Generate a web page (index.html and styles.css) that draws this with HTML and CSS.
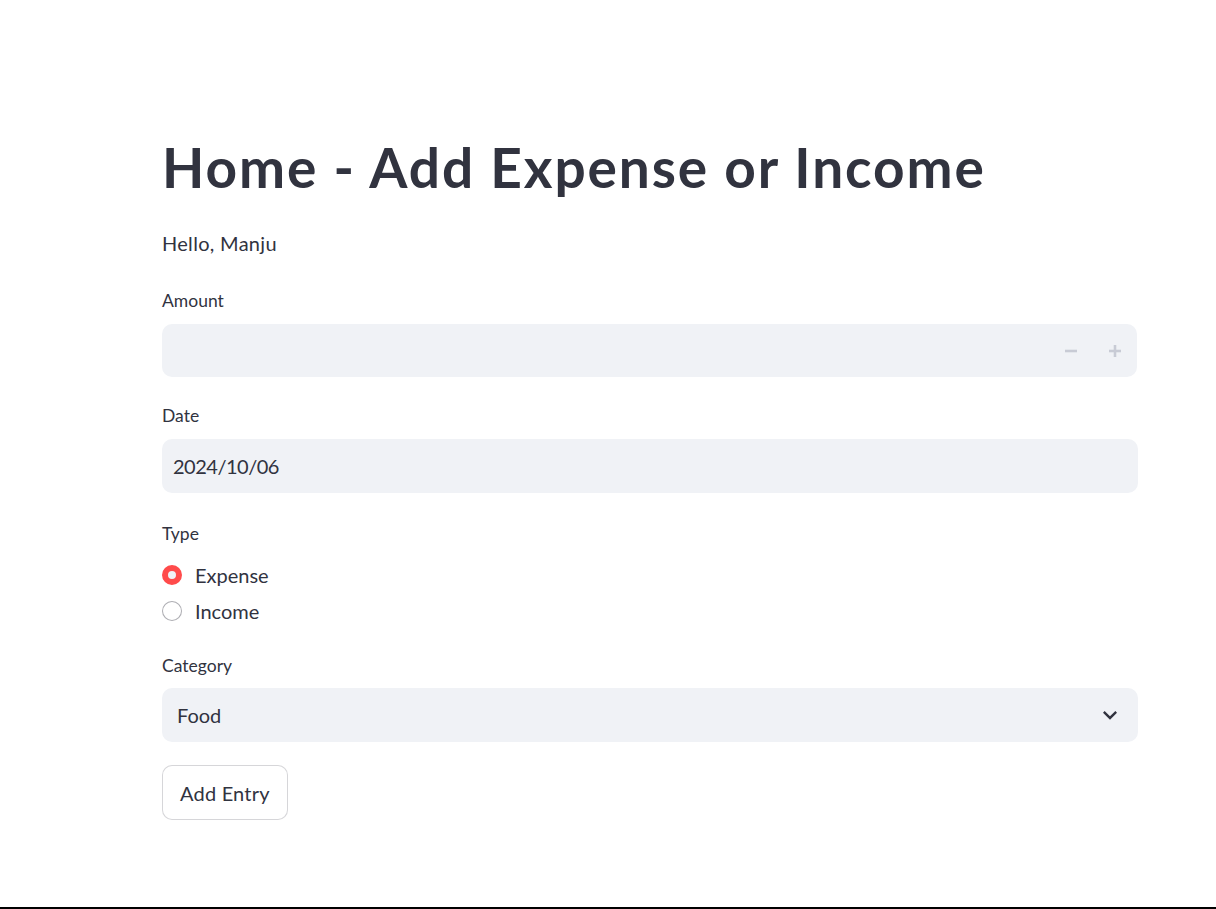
FILE: index.html
```html
<!DOCTYPE html>
<html lang="en">
<head>
<meta charset="utf-8">
<title>Home - Add Expense or Income</title>
<link rel="stylesheet" href="styles.css">
</head>
<body>
<main class="page">
  <h1 class="title">Home - Add Expense or Income</h1>
  <p class="hello">Hello, Manju</p>

  <div class="field field-amount">
    <label class="label">Amount</label>
    <div class="input input-number">
      <span class="value"></span>
      <div class="steppers">
        <button class="step" aria-label="decrement">
          <svg width="14" height="14" viewBox="0 0 14 14"><line x1="1" y1="7" x2="13" y2="7" stroke="#c8cbd5" stroke-width="2.6"/></svg>
        </button>
        <button class="step" aria-label="increment">
          <svg width="14" height="14" viewBox="0 0 14 14"><line x1="1" y1="7" x2="13" y2="7" stroke="#c8cbd5" stroke-width="2.6"/><line x1="7" y1="1" x2="7" y2="13" stroke="#c8cbd5" stroke-width="2.6"/></svg>
        </button>
      </div>
    </div>
  </div>

  <div class="field field-date">
    <label class="label">Date</label>
    <div class="input input-date"><span class="value">2024/10/06</span></div>
  </div>

  <div class="field field-type">
    <label class="label">Type</label>
    <div class="radios">
      <div class="radio-row"><span class="radio checked"></span><span class="radio-text">Expense</span></div>
      <div class="radio-row"><span class="radio"></span><span class="radio-text">Income</span></div>
    </div>
  </div>

  <div class="field field-category">
    <label class="label">Category</label>
    <div class="input input-select">
      <span class="value">Food</span>
      <svg class="chevron" width="28" height="28" viewBox="0 0 24 24"><path d="M16.59 8.59L12 13.17 7.41 8.59 6 10l6 6 6-6z" fill="#31333f"/></svg>
    </div>
  </div>

  <button class="btn">Add Entry</button>
</main>
</body>
</html>
```

FILE: styles.css
```css
html, body {
  margin: 0;
  padding: 0;
}
body {
  min-height: 100vh;
  box-sizing: border-box;
  border-bottom: 2px solid #000;
  background: #fff;
  font-family: Lato, "Noto Sans", sans-serif;
  color: #31333f;
}
.page {
  width: 976px;
  margin-left: 162px;
  padding-top: 134px;
  display: flex;
  flex-direction: column;
  align-items: flex-start;
}
.title {
  margin: 0;
  font-size: 55px;
  line-height: 66px;
  font-weight: 700;
  letter-spacing: 1.9px;
  color: #31333f;
}
.hello {
  margin: 28px 0 0;
  font-size: 20px;
  line-height: 30px;
  letter-spacing: 0.3px;
}
.field {
  width: 100%;
  display: flex;
  flex-direction: column;
  gap: 10px;
  margin-top: 26px;
}
.field-amount {
  margin-top: 30px;
}
.field-date {
  margin-top: 26px;
}
.field-type {
  margin-top: 28px;
}
.field-category {
  margin-top: 24px;
  gap: 9px;
}
.label {
  font-size: 17.5px;
  line-height: 26px;
}
.input {
  height: 54px;
  background: #f0f2f6;
  border-radius: 10px;
  display: flex;
  align-items: center;
  box-sizing: border-box;
}
.input-number {
  height: 53px;
  width: 975px;
  padding-left: 11px;
  justify-content: space-between;
}
.steppers {
  display: flex;
  height: 100%;
}
.step {
  width: 44px;
  height: 100%;
  border: 0;
  background: transparent;
  padding: 0;
  display: flex;
  align-items: center;
  justify-content: center;
}
.input-date {
  padding-left: 11px;
  font-size: 20px;
}
.input-select {
  padding-left: 15px;
  padding-right: 14px;
  font-size: 20px;
  justify-content: space-between;
}
.value {
  font-size: 20px;
  color: #31333f;
}
.input-date .value {
  letter-spacing: -0.5px;
}
.radios {
  display: flex;
  flex-direction: column;
}
.radio-row {
  display: flex;
  align-items: center;
  height: 36px;
  gap: 13px;
}
.radio {
  width: 20px;
  height: 20px;
  border-radius: 50%;
  box-sizing: border-box;
  border: 1px solid rgba(49, 51, 63, 0.4);
  background: #fff;
}
.radio.checked {
  border: 6px solid #ff4b4b;
  background: #f0f2f6;
}
.radio-text {
  font-size: 20px;
  line-height: 30px;
}
.btn {
  margin-top: 23px;
  height: 55px;
  padding: 0 17px;
  border: 1px solid rgba(49, 51, 63, 0.2);
  border-radius: 10px;
  background: #fff;
  color: #31333f;
  font-family: Lato, "Noto Sans", sans-serif;
  font-size: 20px;
  letter-spacing: 0.2px;
}
```
